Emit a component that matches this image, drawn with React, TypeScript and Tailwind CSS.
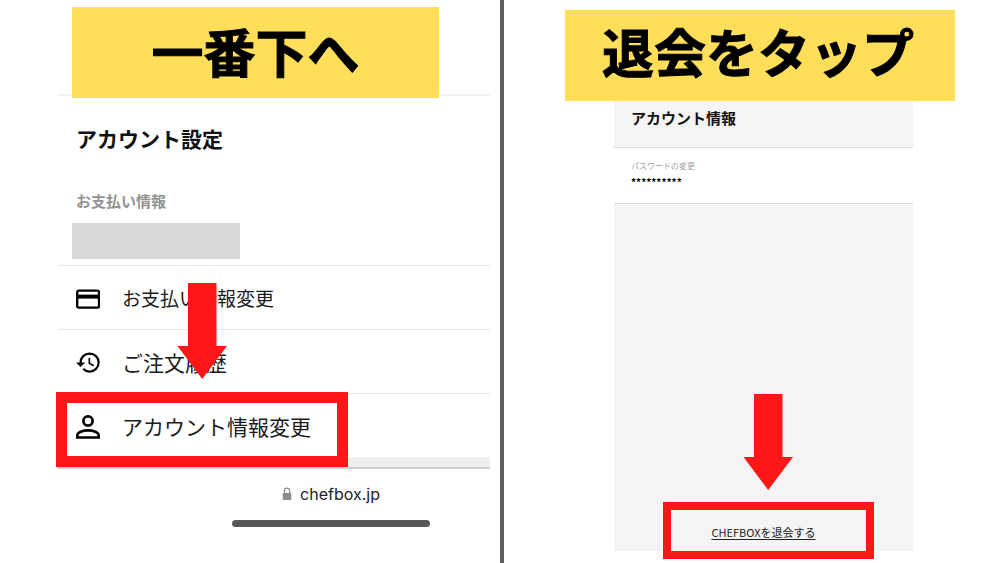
import type { ReactNode } from "react";
import { MdHistory } from "react-icons/md";

function DownArrow({ className }: { className: string }) {
  return (
    <svg
      viewBox="0 0 50 96"
      className={`pointer-events-none absolute h-24 w-[50px] ${className}`}
      aria-hidden="true"
    >
      <path d="M11 0h28.500v63H50L25.200 96 .5 63H11z" fill="#ff1616" />
    </svg>
  );
}

function LockIcon() {
  return (
    <svg viewBox="0 0 10 14" className="h-[14px] w-[10px] text-[#8b8b8b]" aria-hidden="true">
      <path d="M2.300 6.500V4a2.700 2.900 0 0 1 5.400 0v2.500" fill="none" stroke="currentColor" strokeWidth="1.200" />
      <rect x="0.700" y="6" width="8.600" height="7" rx="1.200" fill="currentColor" />
    </svg>
  );
}

function CardIcon() {
  return (
    <svg viewBox="0 0 24 20" className="h-5 w-6 shrink-0" aria-hidden="true">
      <rect x="1.200" y="1.600" width="21.800" height="17" rx="1.600" fill="none" stroke="currentColor" strokeWidth="2.300" />
      <path d="M1 5.600h22v4H1z" fill="currentColor" />
    </svg>
  );
}

function PersonIcon() {
  return (
    <svg viewBox="0 0 24 24" className="size-6 shrink-0" fill="none" stroke="currentColor" strokeWidth="2.700" aria-hidden="true">
      <circle cx="12" cy="6" r="4.600" />
      <path d="M1.400 22.500v-2.300c0-2.900 5.200-4.900 10.600-4.900s10.600 2 10.600 4.900v2.300z" />
    </svg>
  );
}

function Banner({ children, className }: { children: ReactNode; className: string }) {
  return (
    <h1
      className={`relative z-10 flex h-[91px] items-center justify-center whitespace-nowrap bg-[#ffde59] text-[52px] font-bold leading-none text-black [-webkit-text-stroke:1px_black] ${className}`}
    >
      {children}
    </h1>
  );
}

function MenuRow({
  icon,
  label,
  size,
  children,
}: {
  icon: ReactNode;
  label: string;
  size: string;
  children?: ReactNode;
}) {
  return (
    <li className="relative h-16 border-t border-[#e4e4e4]">
      <a href="#" className="flex h-full items-center gap-[22px] pl-[18px] pt-0.5 text-[#1c1c1c]">
        <span className="flex w-6 shrink-0 items-center justify-center text-black">{icon}</span>
        <span className={`whitespace-nowrap ${size}`}>{label}</span>
      </a>
      {children}
    </li>
  );
}

export default function App() {
  return (
    <div className="grid min-h-screen grid-cols-[500fr_4px_496fr] bg-white font-['Noto_Sans_CJK_JP',sans-serif]">
      <section className="pl-[58px] pr-[10px] pt-[7px]">
        <Banner className="ml-[14px] mr-[51px] pb-1">一番下へ</Banner>
        <div className="-mt-1 border-t-2 border-[#f3f3f3]">
          <div className="flex h-[169px] flex-col px-[18px] pt-[26px]">
            <h2 className="text-[21px] font-bold leading-8 text-[#111]">アカウント設定</h2>
            <p className="mt-[35px] text-[15px] font-bold leading-6 text-[#929292]">お支払い情報</p>
            <div className="-ml-1 mt-[10px] h-9 w-[168px] bg-[#d9d9d9]" />
          </div>
          <ul>
            <MenuRow icon={<CardIcon />} label="お支払い情報変更" size="text-[19px]">
              <DownArrow className="left-[119px] top-[17px] z-10" />
            </MenuRow>
            <MenuRow
              icon={<MdHistory className="size-[27px] shrink-0" />}
              label="ご注文履歴"
              size="text-[21px]"
            />
            <MenuRow icon={<PersonIcon />} label="アカウント情報変更" size="text-[21px]">
              <span className="pointer-events-none absolute -left-[2px] -top-[2px] z-10 h-[75px] w-[292px] border-[11px] border-[#ff1616]" />
            </MenuRow>
          </ul>
          <div className="h-3 border-b-2 border-[#d0d0d0] bg-[#efefef]" />
          <footer className="flex flex-col items-center gap-[14px] pl-[114px] pt-[13px]">
            <p className="flex items-center gap-2 font-['Inter',sans-serif] text-base leading-6 text-[#222]">
              <LockIcon />
              chefbox.jp
            </p>
            <div className="h-[7px] w-[198px] rounded-full bg-[#585858]" />
          </footer>
        </div>
      </section>

      <div className="bg-[#606060]" />

      <section className="flex flex-col pb-3 pt-[10px]">
        <Banner className="ml-[61px] mr-[45px] pb-[10px] pr-1">退会をタップ</Banner>
        <div className="ml-[110px] mr-[87px] flex flex-1 flex-col bg-[#f4f4f4]">
          <h2 className="h-[46px] px-[17px] pt-[5px] text-[15px] font-bold leading-6 text-[#111]">アカウント情報</h2>
          <div className="h-[57px] border-y border-[#dcdcdc] bg-white px-[17px] pt-3">
            <p className="text-[8px] leading-3 text-[#a3a3a3]">パスワードの変更</p>
            <p className="mt-[2px] text-[10px] font-bold leading-4 text-black">**********</p>
          </div>
          <div className="relative mt-auto flex h-[38px] justify-center">
            <a href="#" className="text-[11px] leading-[38px] text-[#222] underline underline-offset-2">
              CHEFBOXを退会する
            </a>
            <DownArrow className="-top-[119px] left-[129px]" />
            <span className="pointer-events-none absolute -top-[11px] left-[49px] h-[57px] w-[211px] border-[8px] border-[#ff1616]" />
          </div>
        </div>
      </section>
    </div>
  );
}
